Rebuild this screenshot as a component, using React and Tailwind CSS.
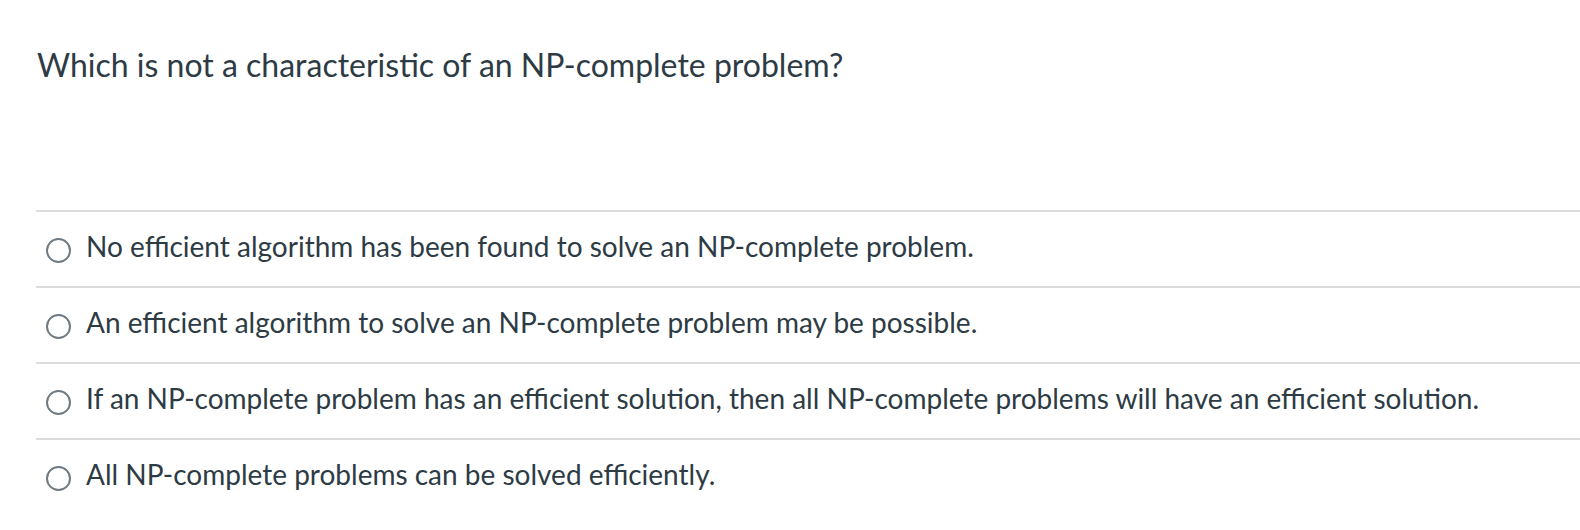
export default function App() {
  const options = [
    "No efficient algorithm has been found to solve an NP-complete problem.",
    "An efficient algorithm to solve an NP-complete problem may be possible.",
    "If an NP-complete problem has an efficient solution, then all NP-complete problems will have an efficient solution.",
    "All NP-complete problems can be solved efficiently.",
  ];
  return (
    <div
      className="w-[1580px] h-[530px] bg-white overflow-hidden pl-[36px] text-[#2d3b45]"
      style={{ fontFamily: "Lato, 'Noto Sans', sans-serif" }}
    >
      <div className="pt-[42px] pl-[1px] text-[32px] leading-[45px] h-[210px]">
        Which is not a characteristic of an NP-complete problem?
      </div>
      {options.map((o, i) => (
        <div
          key={i}
          className="border-t-2 border-[#dcdcdc] h-[76px] flex items-start pt-[16px] pl-[10px]"
        >
          <span className="mt-[10px] w-[25px] h-[25px] rounded-full border-2 border-[#6f7a82] shrink-0" />
          <span className="ml-[15px] text-[28px] leading-[36px]">{o}</span>
        </div>
      ))}
    </div>
  );
}
